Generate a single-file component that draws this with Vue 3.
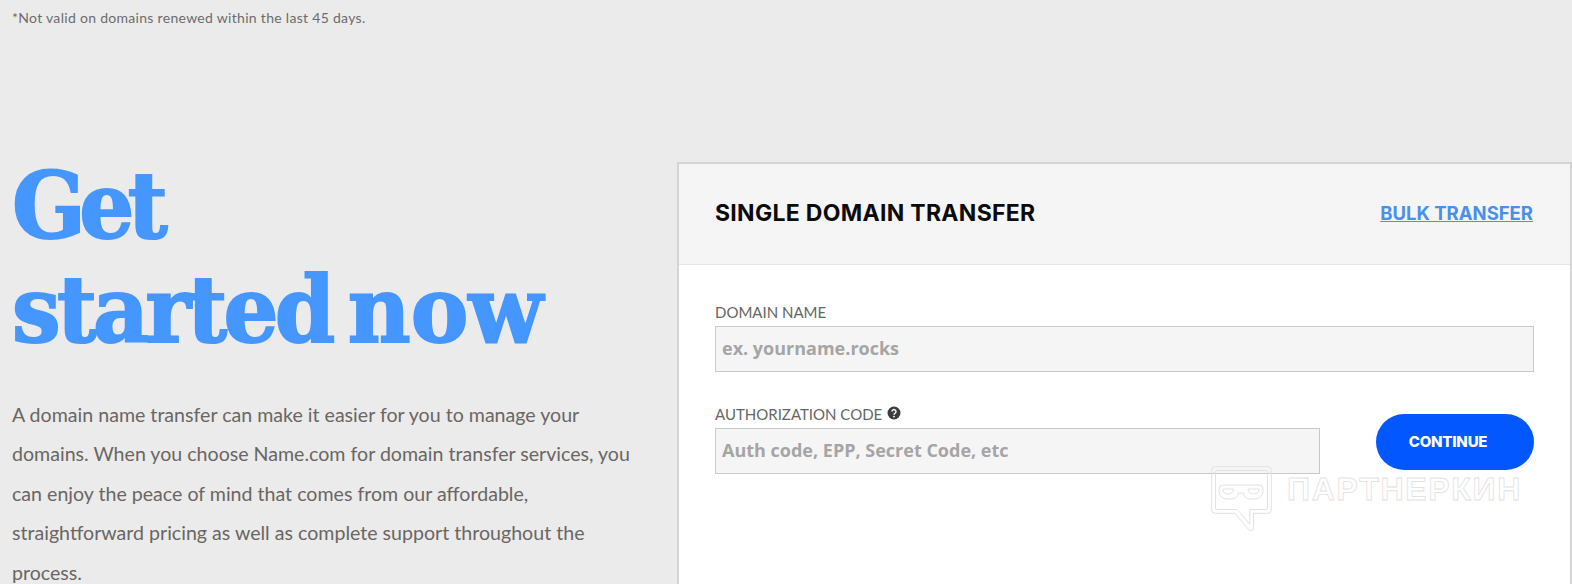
<script setup>
const leadLines = [
  'A domain name transfer can make it easier for you to manage your',
  'domains. When you choose Name.com for domain transfer services, you',
  'can enjoy the peace of mind that comes from our affordable,',
  'straightforward pricing as well as complete support throughout the',
  'process.',
]
</script>

<template>
  <div class="page">
    <p class="note">*Not valid on domains renewed within the last 45 days.</p>
    <div class="content">
      <section class="intro">
        <h1><span class="tight">Get</span><br />started <span class="loose">now</span></h1>
        <p class="lead">
          <span v-for="line in leadLines" :key="line">{{ line }}</span>
        </p>
      </section>
      <section class="card">
        <header class="card-head">
          <h2>SINGLE DOMAIN TRANSFER</h2>
          <a href="#" class="bulk">BULK TRANSFER</a>
        </header>
        <form class="card-body" @submit.prevent>
          <label class="field-label" for="domain">DOMAIN NAME</label>
          <input id="domain" class="field" type="text" placeholder="ex. yourname.rocks" />
          <div class="auth-row">
            <div class="auth-col">
              <label class="field-label" for="auth">
                AUTHORIZATION CODE
                <svg class="help" viewBox="0 0 14 14" width="14" height="14">
                  <circle cx="7" cy="7" r="6.500" fill="#3c3c3c" />
                  <path d="M5 5.500a2 2 0 1 1 3.100 1.700c-.7.4-1.100.8-1.100 1.500" fill="none" stroke="#fff" stroke-width="1.400" />
                  <circle cx="7" cy="10.600" r=".9" fill="#fff" />
                </svg>
              </label>
              <input id="auth" class="field" type="text" placeholder="Auth code, EPP, Secret Code, etc" />
            </div>
            <button class="continue" type="submit">CONTINUE</button>
          </div>
        </form>
      </section>
    </div>
    <div class="watermark">
      <svg viewBox="0 0 62 66" width="62" height="66" fill="none" stroke="#e2e2e2" stroke-width="1">
        <path d="M4 .7H57a3.300 3.300 0 0 1 3.300 3.300V44a3.300 3.300 0 0 1-3.300 3.300H42.500V62a2.700 2.700 0 0 1-4.700 1.800L24 47.300H4a3.300 3.300 0 0 1-3.300-3.300V4A3.300 3.300 0 0 1 4 .7z" />
        <path d="M6 4.500H55a1.500 1.500 0 0 1 1.500 1.500V42a1.500 1.500 0 0 1-1.500 1.500H38.800V58L26 43.500H6A1.500 1.500 0 0 1 4.500 42V6A1.500 1.500 0 0 1 6 4.500z" />
        <path d="M12 19H48a4 4 0 0 1 4 4v2a8 8 0 0 1-8 8h-5a7 7 0 0 1-6.500-6h-5a7 7 0 0 1-6.500 6h-5a8 8 0 0 1-8-8v-2a4 4 0 0 1 4-4z" />
        <path d="M12 23h10.500c0 3-2 5-5 5h-1c-3 0-4.500-2-4.500-5zM37 23h11c0 3-1.500 5-4.500 5h-1c-3 0-5.500-2-5.500-5z" />
      </svg>
      <span>ПАРТНЕРКИН</span>
    </div>
  </div>
</template>

<style>
html, body {
  margin: 0;
  background: #ebebeb;
  overflow: hidden;
}
</style>

<style scoped>
.page {
  position: relative;
  height: 584px;
  overflow: hidden;
  background: #ebebeb;
  font-family: Lato, "Open Sans", sans-serif;
}

.note {
  margin: 0;
  padding: 10px 0 1px 12px;
  font-size: 14px;
  line-height: 15px;
  letter-spacing: 0.3px;
  color: #6b6b6b;
}

.content {
  display: flex;
  align-items: flex-start;
  margin-top: 136px;
}

.intro {
  width: 677px;
  flex: none;
  padding-left: 12px;
  box-sizing: border-box;
}

h1 {
  margin: -8px 0 0;
  font-family: "DejaVu Serif", serif;
  font-size: 92px;
  font-weight: 700;
  line-height: 104px;
  letter-spacing: -4px;
  word-spacing: -10.500px;
  color: #4596ff;
  -webkit-text-stroke: 2px #4596ff;
  transform: scaleX(0.94);
  transform-origin: left center;
}

.tight {
  letter-spacing: -7px;
}

.loose {
  letter-spacing: 0;
}

.lead {
  margin: 33px 0 0;
  font-size: 19.600px;
  line-height: 39.400px;
  color: #6a6663;
}

.lead span {
  display: block;
  white-space: nowrap;
}

.card {
  flex: 1;
  height: 440px;
  background: #fff;
  border: 1px solid #d4d4d4;
  border-width: 2px 2px 0 2px;
  box-sizing: border-box;
}

.card-head {
  display: flex;
  justify-content: space-between;
  align-items: center;
  height: 101px;
  padding: 0 37px 3px 36px;
  box-sizing: border-box;
  background: #f5f5f5;
  border-bottom: 1px solid #e6e6e6;
}

h2 {
  margin: 0;
  font-family: Inter, sans-serif;
  font-size: 23px;
  font-weight: 700;
  letter-spacing: 0.3px;
  color: #0b0b0b;
}

.bulk {
  font-family: Inter, sans-serif;
  font-size: 18.500px;
  font-weight: 700;
  color: #4a90e8;
}

.card-body {
  padding: 37px 36px 0 36px;
}

.field-label {
  display: block;
  height: 24px;
  font-size: 15px;
  line-height: 20px;
  color: #666;
}

.help {
  margin-left: 1px;
  vertical-align: 0;
}

.field {
  display: block;
  width: 100%;
  height: 46px;
  padding: 0 6px 3px;
  box-sizing: border-box;
  background: #f5f5f5;
  border: 1px solid #c8c8c8;
  border-radius: 0;
  font-family: "Open Sans", sans-serif;
  font-size: 18px;
  font-weight: 700;
}

.field::placeholder {
  color: #a5a5a5;
  opacity: 1;
}

.auth-row {
  display: flex;
  justify-content: space-between;
  align-items: flex-start;
  margin-top: 32px;
}

.auth-col {
  width: 605px;
}

.continue {
  width: 158px;
  height: 56px;
  margin-top: 10px;
  padding: 0 14px 2px 0;
  background: #0357ff;
  border: none;
  border-radius: 28px;
  font-family: Inter, sans-serif;
  font-size: 15px;
  font-weight: 800;
  letter-spacing: -0.2px;
  color: #fff;
}

.watermark {
  position: absolute;
  left: 1211px;
  top: 466px;
  display: flex;
  align-items: flex-start;
  gap: 14px;
  pointer-events: none;
}

.watermark span {
  margin-top: 5px;
  font-family: "Liberation Sans", sans-serif;
  font-size: 32px;
  font-weight: 700;
  letter-spacing: 1.700px;
  color: transparent;
  -webkit-text-stroke: 0.800px #e2e2e2;
}
</style>
